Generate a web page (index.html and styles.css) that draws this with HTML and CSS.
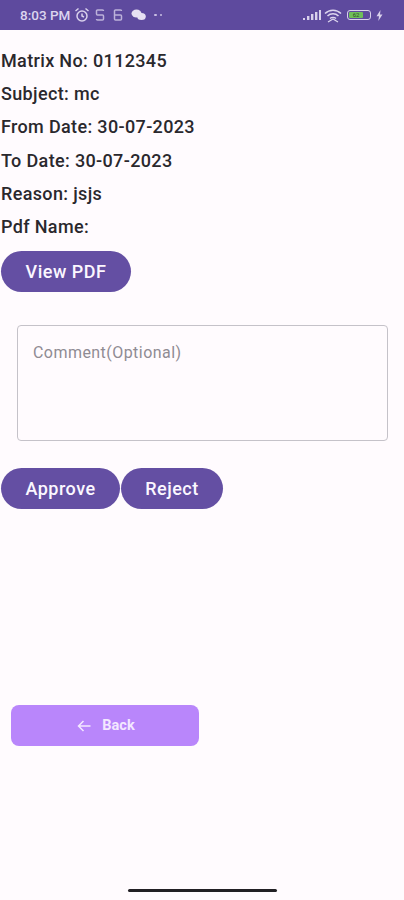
FILE: index.html
```html
<!DOCTYPE html>
<html lang="en">
<head>
    <meta charset="UTF-8">
    <meta name="viewport" content="width=device-width, initial-scale=1.0">
    <title>Leave Details</title>
    <link rel="stylesheet" href="styles.css">
</head>
<body>
    <div class="status-bar">
        <div class="status-left">
            <span class="status-time">8:03 PM</span>
            <svg width="16" height="16" viewBox="0 0 16 16" fill="none" stroke="#d9d1ec" stroke-width="1.5">
                <circle cx="8" cy="9" r="5"/>
                <path d="M8 6.5V9l2 1M1.5 4l3-2.5M14.5 4l-3-2.5"/>
            </svg>
            <svg class="gap-s" width="10" height="14" viewBox="0 0 10 14" fill="none" stroke="#bdb2da" stroke-width="1.5" stroke-linejoin="round">
                <path d="M8.5 3a1 1 0 0 0-1-1h-5a1 1 0 0 0-1 1v3a1 1 0 0 0 1 1h5a1 1 0 0 1 1 1v3a1 1 0 0 1-1 1h-5a1 1 0 0 1-1-1"/>
            </svg>
            <svg class="gap-m" width="10" height="14" viewBox="0 0 10 14" fill="none" stroke="#bdb2da" stroke-width="1.5" stroke-linejoin="round">
                <path d="M8.5 3a1 1 0 0 0-1-1h-5a1 1 0 0 0-1 1v8a1 1 0 0 0 1 1h5a1 1 0 0 0 1-1V8a1 1 0 0 0-1-1h-6"/>
            </svg>
            <svg class="gap-m" width="15" height="12" viewBox="0 0 15 12" fill="#e6e0f2">
                <ellipse cx="5.5" cy="4.5" rx="5" ry="4"/>
                <ellipse cx="10.5" cy="7.5" rx="4.3" ry="3.6"/>
            </svg>
            <span class="status-dots"><i></i><i></i></span>
        </div>
        <div class="status-right">
            <svg class="signal" width="18" height="12" viewBox="0 0 18 12" fill="#d9d1ec">
                <rect x="0" y="9" width="2" height="2"/>
                <rect x="4" y="7" width="2.4" height="4"/>
                <rect x="8" y="5" width="2.4" height="6"/>
                <rect x="12" y="3" width="2.4" height="8"/>
                <rect x="16" y="1" width="2" height="10"/>
            </svg>
            <svg width="18" height="15" viewBox="0 0 18 15" fill="none" stroke="#ddd6ee" stroke-width="1.5">
                <path d="M1 5.5c4.5-4.5 11.5-4.5 16 0M3.5 8c3-3 8-3 11 0M6 10.5c1.6-1.5 4.4-1.5 6 0"/>
                <path d="M4 14l5-3 5 3" stroke-width="1.2"/>
            </svg>
            <div class="battery"><div class="battery-fill">62</div></div>
            <svg width="7" height="11" viewBox="0 0 7 11" fill="#d9d1ec">
                <path d="M4.5 0L0.5 6.3h2.5L2.3 11l4.2-6.5H4z"/>
            </svg>
        </div>
    </div>

    <div class="content">
        <p class="info-row">Matrix No: 0112345</p>
        <p class="info-row">Subject: mc</p>
        <p class="info-row">From Date: 30-07-2023</p>
        <p class="info-row">To Date: 30-07-2023</p>
        <p class="info-row">Reason: jsjs</p>
        <p class="info-row">Pdf Name:</p>

        <button class="pill-btn view-btn">View PDF</button>

        <div class="comment-box">Comment(Optional)</div>

        <div class="action-row">
            <button class="pill-btn approve-btn">Approve</button>
            <button class="pill-btn reject-btn">Reject</button>
        </div>

        <button class="back-btn">
            <svg width="14" height="12" viewBox="0 0 14 12" fill="none" stroke="#f3e8ff" stroke-width="1.5">
                <path d="M13.5 6H1.5M6.5 1l-5 5 5 5"/>
            </svg>
            <span>Back</span>
        </button>
    </div>

    <div class="home-bar"></div>
</body>
</html>
```

FILE: styles.css
```css
html, body {
    margin: 0;
    height: 900px;
    overflow: hidden;
}

body {
    background-color: #fffbfe;
    font-family: Roboto, "Liberation Sans", sans-serif;
    display: flex;
    flex-direction: column;
}

.status-bar {
    height: 30px;
    background-color: #5e4a9e;
    display: flex;
    justify-content: space-between;
    align-items: center;
    padding: 0 21px 0 20px;
    box-sizing: border-box;
    color: #dcd5ee;
}

.status-left, .status-right {
    display: flex;
    align-items: center;
}

.status-right {
    gap: 5px;
}

.signal {
    margin-right: -2px;
}

.status-time {
    font-size: 13.5px;
    font-weight: 500;
    margin-right: 4px;
}

.gap-s {
    margin-left: 5px;
}

.gap-m {
    margin-left: 8px;
}

.status-dots {
    display: flex;
    gap: 3px;
    margin-left: 8px;
}

.status-dots i {
    width: 2.5px;
    height: 2.5px;
    background-color: #c9bfe2;
    border-radius: 50%;
}

.battery {
    width: 24px;
    height: 10px;
    border: 1px solid #d9d1ec;
    border-radius: 3px;
    padding: 1px;
    box-sizing: border-box;
}

.battery-fill {
    width: 14px;
    height: 6px;
    background-color: #6fbf5a;
    border-radius: 1px;
    font-size: 6px;
    line-height: 6px;
    color: #2c4a2a;
    text-align: center;
}

.content {
    flex: 1;
    padding: 13.5px 0 0 1px;
}

.info-row {
    margin: 0;
    height: 33.4px;
    line-height: 33.4px;
    font-size: 18px;
    font-weight: 500;
    letter-spacing: 0.35px;
    color: #2a282d;
}

.pill-btn {
    display: block;
    height: 41px;
    padding: 0;
    border: none;
    border-radius: 21px;
    background-color: #644fa3;
    color: #fbf7ff;
    font-family: inherit;
    font-size: 18px;
    font-weight: 500;
    letter-spacing: 0.5px;
    cursor: pointer;
}

.view-btn {
    width: 130px;
    margin-top: 7.1px;
}

.comment-box {
    width: 371px;
    height: 116px;
    margin: 33px 0 0 16px;
    padding: 17px 15px;
    box-sizing: border-box;
    border: 1.5px solid #c5c2c9;
    border-radius: 4px;
    font-size: 16px;
    letter-spacing: 0.45px;
    line-height: 20px;
    color: #8f8b93;
}

.action-row {
    display: flex;
    gap: 1px;
    margin-top: 27px;
}

.approve-btn {
    width: 119px;
}

.reject-btn {
    width: 102px;
}

.back-btn {
    width: 188px;
    height: 41px;
    margin: 196px 0 0 10px;
    padding: 1px 0 0 2px;
    border: none;
    border-radius: 8px;
    background-color: #b986fb;
    color: #f3e8ff;
    font-family: inherit;
    font-size: 14.5px;
    font-weight: 700;
    display: flex;
    align-items: center;
    justify-content: center;
    gap: 11px;
    cursor: pointer;
}

.home-bar {
    width: 149px;
    height: 3px;
    background-color: #222024;
    border-radius: 2px;
    margin: 0 auto 8px;
}
```
